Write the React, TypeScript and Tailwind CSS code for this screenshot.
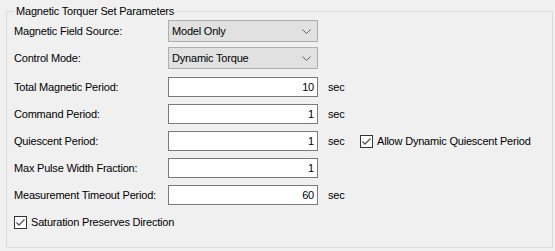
import React from 'react';

const font = { fontFamily: '"Liberation Sans", Arial, sans-serif' };

function Combo({ value, className = '' }: { value: string; className?: string }) {
  return (
    <div
      className={`flex h-[22px] w-[150px] items-center justify-between border border-[#adadad] bg-[#e1e1e1] pl-[3px] pr-[6px] ${className}`}
    >
      <span>{value}</span>
      <svg width="9" height="5" viewBox="0 0 9 5" className="mt-[1px]">
        <path d="M0.5 0.5 L4.5 4.5 L8.5 0.5" fill="none" stroke="#606060" strokeWidth="1" />
      </svg>
    </div>
  );
}

function Field({ value }: { value: string }) {
  return (
    <div className="flex h-[20px] w-[150px] items-center justify-end border border-[#7a7a7a] bg-white pr-[3px]">
      {value}
    </div>
  );
}

function CheckBox({ label }: { label: string }) {
  return (
    <div className="flex items-center gap-[4px]">
      <div className="flex h-[13px] w-[13px] items-center justify-center border border-[#333333] bg-white">
        <svg width="11" height="11" viewBox="0 0 11 11">
          <path d="M1.5 5.5 L4 8 L9.5 2.5" fill="none" stroke="#555555" strokeWidth="1.3" />
        </svg>
      </div>
      <span>{label}</span>
    </div>
  );
}

const rows = [
  { label: 'Total Magnetic Period:', value: '10', unit: true },
  { label: 'Command Period:', value: '1', unit: true },
  { label: 'Quiescent Period:', value: '1', unit: true, extra: true },
  { label: 'Max Pulse Width Fraction:', value: '1', unit: false },
  { label: 'Measurement Timeout Period:', value: '60', unit: true },
];

export default function App() {
  return (
    <div className="h-[251px] w-[555px] bg-[#f0f0f0] text-[11px] tracking-[-0.2px] text-black" style={font}>
      <div className="pl-[6px] pr-[2px] pt-[11px]">
        <div className="relative h-[237px] border border-[#dcdcdc] pl-[7px]">
          <span className="absolute left-[7px] top-[-8px] bg-[#f0f0f0] px-[2px] leading-[14px]">
            Magnetic Torquer Set Parameters
          </span>

          <div className="mt-[8px] flex items-center">
            <span className="w-[154px]">Magnetic Field Source:</span>
            <Combo value="Model Only" />
          </div>
          <div className="mt-[5px] flex items-center">
            <span className="w-[154px]">Control Mode:</span>
            <Combo value="Dynamic Torque" />
          </div>

          <div className="mt-[8px] flex flex-col gap-[7px]">
            {rows.map((r) => (
              <div key={r.label} className="flex items-center">
                <span className="w-[154px]">{r.label}</span>
                <Field value={r.value} />
                <span className="ml-[10px] w-[32px]">{r.unit ? 'sec' : ''}</span>
                {r.extra && <CheckBox label="Allow Dynamic Quiescent Period" />}
              </div>
            ))}
          </div>

          <div className="mt-[9px]">
            <CheckBox label="Saturation Preserves Direction" />
          </div>
        </div>
      </div>
    </div>
  );
}
